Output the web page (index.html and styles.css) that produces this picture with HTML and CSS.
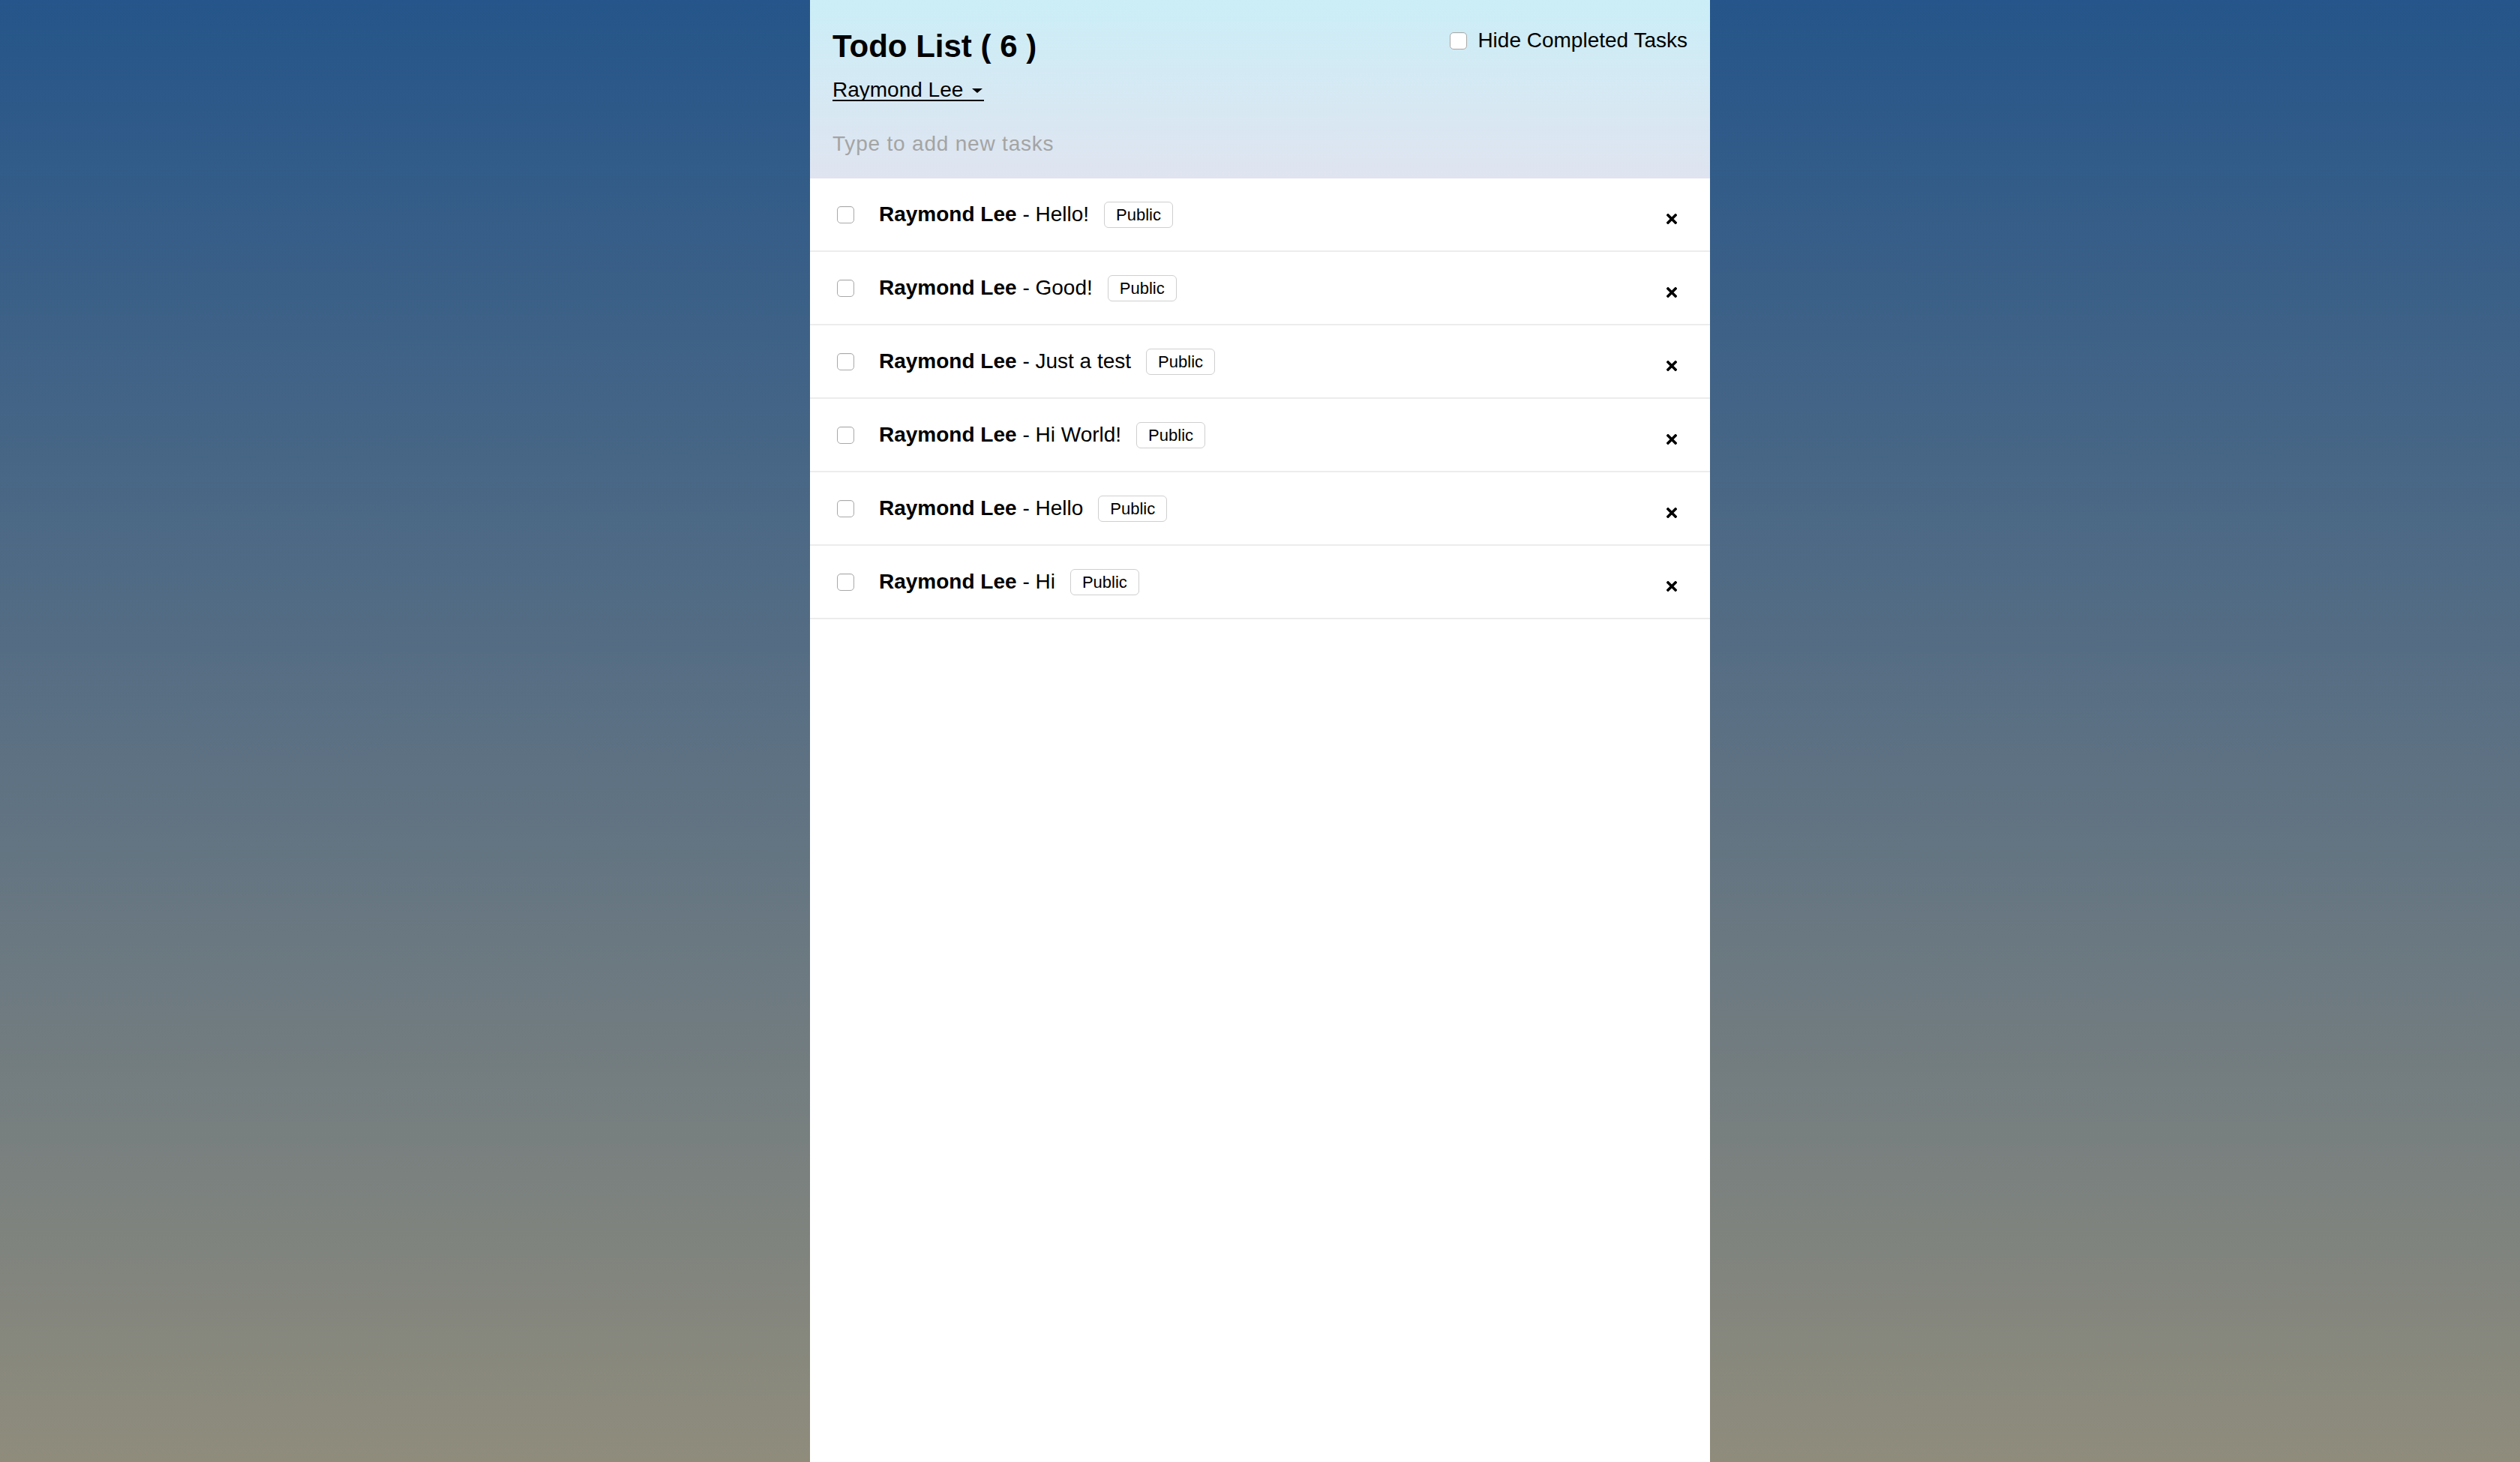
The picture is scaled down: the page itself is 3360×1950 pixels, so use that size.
FILE: index.html
```html
<!DOCTYPE html>
<html lang="en">
<head>
<meta charset="utf-8">
<title>Todo List</title>
<link rel="stylesheet" href="styles.css">
</head>
<body>
<div class="panel">
  <header class="header">
    <div class="header-top">
      <h1 class="title">Todo List ( 6 )</h1>
      <label class="hide-label"><input type="checkbox" class="check">Hide Completed Tasks</label>
    </div>
    <a class="user-menu" href="#">Raymond Lee<svg class="caret" width="14" height="6" viewBox="0 0 14 6"><path d="M0 0H14L7 6Z" fill="#000"/></svg></a>
    <input class="new-task" type="text" placeholder="Type to add new tasks">
  </header>
  <ul class="tasks">
    <li class="task"><input type="checkbox" class="check task-check"><span class="task-text"><strong>Raymond Lee</strong> - Hello!</span><span class="badge">Public</span><button class="delete" aria-label="delete"><svg width="14" height="14" viewBox="0 0 14 14"><path d="M2 2L12 12M12 2L2 12" stroke="#000" stroke-width="3.6" stroke-linecap="square"/></svg></button></li>
    <li class="task"><input type="checkbox" class="check task-check"><span class="task-text"><strong>Raymond Lee</strong> - Good!</span><span class="badge">Public</span><button class="delete" aria-label="delete"><svg width="14" height="14" viewBox="0 0 14 14"><path d="M2 2L12 12M12 2L2 12" stroke="#000" stroke-width="3.6" stroke-linecap="square"/></svg></button></li>
    <li class="task"><input type="checkbox" class="check task-check"><span class="task-text"><strong>Raymond Lee</strong> - Just a test</span><span class="badge">Public</span><button class="delete" aria-label="delete"><svg width="14" height="14" viewBox="0 0 14 14"><path d="M2 2L12 12M12 2L2 12" stroke="#000" stroke-width="3.6" stroke-linecap="square"/></svg></button></li>
    <li class="task"><input type="checkbox" class="check task-check"><span class="task-text"><strong>Raymond Lee</strong> - Hi World!</span><span class="badge">Public</span><button class="delete" aria-label="delete"><svg width="14" height="14" viewBox="0 0 14 14"><path d="M2 2L12 12M12 2L2 12" stroke="#000" stroke-width="3.6" stroke-linecap="square"/></svg></button></li>
    <li class="task"><input type="checkbox" class="check task-check"><span class="task-text"><strong>Raymond Lee</strong> - Hello</span><span class="badge">Public</span><button class="delete" aria-label="delete"><svg width="14" height="14" viewBox="0 0 14 14"><path d="M2 2L12 12M12 2L2 12" stroke="#000" stroke-width="3.6" stroke-linecap="square"/></svg></button></li>
    <li class="task"><input type="checkbox" class="check task-check"><span class="task-text"><strong>Raymond Lee</strong> - Hi</span><span class="badge">Public</span><button class="delete" aria-label="delete"><svg width="14" height="14" viewBox="0 0 14 14"><path d="M2 2L12 12M12 2L2 12" stroke="#000" stroke-width="3.6" stroke-linecap="square"/></svg></button></li>
  </ul>
</div>
</body>
</html>
```
FILE: styles.css
```css
html, body {
  margin: 0;
  padding: 0;
}
body {
  min-height: 100vh;
  background: linear-gradient(to bottom, #25558a 0%, #5b7083 50%, #8f8c7c 100%);
  font-family: "Liberation Sans", Arial, Helvetica, sans-serif;
  font-size: 28px;
  color: #000;
}
.panel {
  width: 1200px;
  min-height: 100vh;
  margin: 0 auto;
  background: #fff;
}
.header {
  padding: 37px 30px 29px 30px;
  background: linear-gradient(to bottom, #cbeef7 0%, #dfe4f0 100%);
  display: flex;
  flex-direction: column;
  align-items: flex-start;
}
.header-top {
  display: flex;
  justify-content: space-between;
  align-items: flex-start;
  width: 100%;
}
.title {
  margin: 0;
  font-size: 42px;
  line-height: 50px;
  font-weight: bold;
}
.hide-label {
  display: flex;
  align-items: center;
  line-height: 34px;
  font-size: 28px;
}
.check {
  -webkit-appearance: none;
  appearance: none;
  margin: 0;
  width: 23px;
  height: 23px;
  border: 1px solid #a9a9a9;
  border-radius: 5px;
  background: #fff;
  box-shadow: inset 0 1px 1px rgba(0,0,0,0.06);
  flex: none;
}
.hide-label .check {
  margin-right: 14px;
}
.user-menu {
  display: inline-block;
  margin-top: 16px;
  line-height: 34px;
  color: #000;
  text-decoration: none;
  padding-right: 2px;
  background-image: linear-gradient(#000, #000);
  background-repeat: no-repeat;
  background-size: 100% 2px;
  background-position: 0 30px;
}
.caret {
  margin-left: 12px;
  vertical-align: 5px;
}
.new-task {
  margin-top: 38px;
  width: 100%;
  height: 34px;
  padding: 0;
  border: none;
  outline: none;
  background: transparent;
  font-family: inherit;
  font-size: 28px;
  letter-spacing: 0.8px;
  color: #000;
}
.new-task::placeholder {
  color: #a4a4a4;
}
.tasks {
  list-style: none;
  margin: 0;
  padding: 0;
}
.task {
  display: flex;
  align-items: center;
  height: 96px;
  padding: 0 44px 0 36px;
  border-bottom: 2px solid #ececec;
}
.task-check {
  margin-right: 33px;
}
.task-text {
  line-height: 34px;
  white-space: nowrap;
}
.task-text strong {
  font-weight: bold;
}
.badge {
  margin-left: 20px;
  padding: 0 15px;
  height: 33px;
  line-height: 33px;
  font-size: 22px;
  border: 1px solid #cfcfcf;
  border-radius: 6px;
  background: #fff;
}
.delete {
  margin-left: auto;
  margin-top: 12px;
  padding: 0;
  border: none;
  background: none;
  width: 14px;
  height: 14px;
  display: flex;
}
```
